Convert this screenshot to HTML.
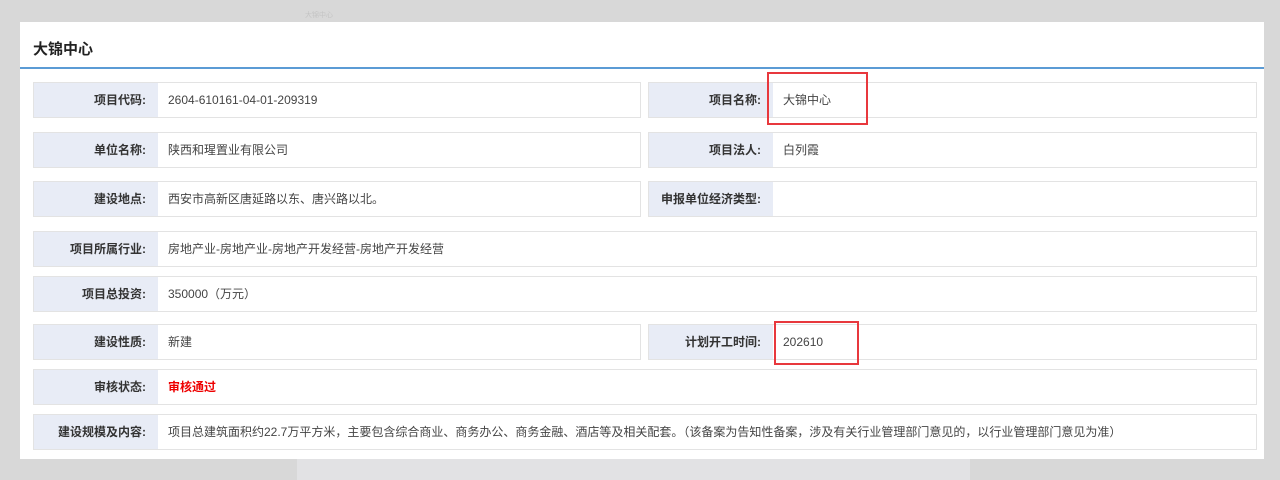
<!DOCTYPE html><html><head><meta charset="utf-8"><style>
body{margin:0;width:1280px;height:480px;background:#d8d8d8;position:relative;overflow:hidden;font-family:"Liberation Sans","Noto Sans CJK SC",sans-serif;font-size:12px;color:#333}
.panel{position:absolute;left:20px;top:22px;width:1244px;height:437px;background:#fff}
.title{position:absolute;left:13px;top:16px;font-size:15px;font-weight:bold;color:#222}
.line{position:absolute;left:0;top:45px;width:1244px;height:2px;background:#5b9bd5}
.r{position:absolute;height:34px;border:1px solid #e3e3e3;display:flex;background:#fff}
.l{width:124px;background:#e8ecf6;font-weight:bold;text-align:right;padding-right:12px;box-sizing:border-box;line-height:34px;color:#333}
.v{padding-left:10px;line-height:34px;color:#444}
.box{position:absolute;border:2px solid #e8383d}
.ghost{position:absolute;left:305px;top:10px;font-size:7px;color:#c4c4c4}
</style></head><body>
<div style="position:absolute;left:297px;top:459px;width:673px;height:21px;background:#e2e2e4"></div>
<div class="ghost">大锦中心</div>
<div class="panel"><div class="title">大锦中心</div><div class="line"></div></div>
<div class="r" style="left:33px;top:82px;width:606px"><div class="l">项目代码:</div><div class="v">2604-610161-04-01-209319</div></div>
<div class="r" style="left:648px;top:82px;width:607px"><div class="l">项目名称:</div><div class="v">大锦中心</div></div>
<div class="r" style="left:33px;top:132px;width:606px"><div class="l">单位名称:</div><div class="v">陕西和瑆置业有限公司</div></div>
<div class="r" style="left:648px;top:132px;width:607px"><div class="l">项目法人:</div><div class="v">白列霞</div></div>
<div class="r" style="left:33px;top:181px;width:606px"><div class="l">建设地点:</div><div class="v">西安市高新区唐延路以东、唐兴路以北。</div></div>
<div class="r" style="left:648px;top:181px;width:607px"><div class="l">申报单位经济类型:</div><div class="v"></div></div>
<div class="r" style="left:33px;top:231px;width:1222px"><div class="l">项目所属行业:</div><div class="v">房地产业-房地产业-房地产开发经营-房地产开发经营</div></div>
<div class="r" style="left:33px;top:276px;width:1222px"><div class="l">项目总投资:</div><div class="v">350000（万元）</div></div>
<div class="r" style="left:33px;top:324px;width:606px"><div class="l">建设性质:</div><div class="v">新建</div></div>
<div class="r" style="left:648px;top:324px;width:607px"><div class="l">计划开工时间:</div><div class="v">202610</div></div>
<div class="r" style="left:33px;top:369px;width:1222px"><div class="l">审核状态:</div><div class="v" style="color:#e00;font-weight:bold">审核通过</div></div>
<div class="r" style="left:33px;top:414px;width:1222px"><div class="l">建设规模及内容:</div><div class="v">项目总建筑面积约22.7万平方米，主要包含综合商业、商务办公、商务金融、酒店等及相关配套。（该备案为告知性备案，涉及有关行业管理部门意见的，以行业管理部门意见为准）</div></div>
<div class="box" style="left:767px;top:72px;width:97px;height:49px"></div>
<div class="box" style="left:774px;top:321px;width:81px;height:40px"></div>
</body></html>
